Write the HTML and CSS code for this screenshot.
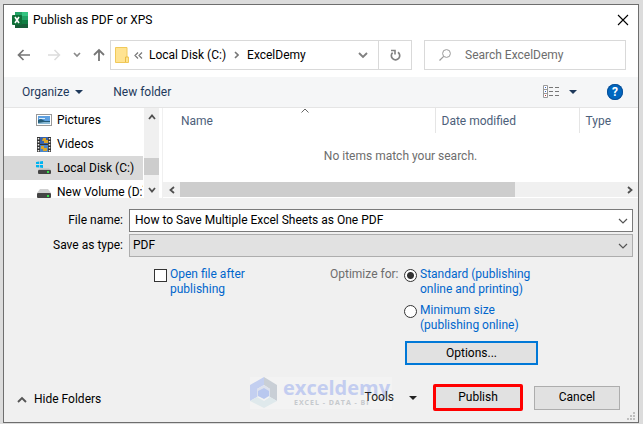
FILE: index.html
```html
<!DOCTYPE html>
<html lang="en">
<head>
    <meta charset="UTF-8" />
    <meta name="viewport" content="width=device-width, initial-scale=1.0"/>
    <title>Publish as PDF or XPS</title>
    <link rel="stylesheet" href="styles.css">
</head>
<body>

<main class="dialog">
    <!-- Title bar -->
    <header class="title-bar">
        <svg class="app-icon" width="16" height="16" viewBox="0 0 16 16">
            <rect x="3" y="0" width="13" height="16" rx="1" fill="#107c41"/>
            <rect x="3" y="0" width="7" height="4" fill="#21a366"/>
            <rect x="10" y="0" width="6" height="4" fill="#33c481"/>
            <rect x="10" y="4" width="6" height="4" fill="#21a366"/>
            <rect x="3" y="12" width="13" height="4" fill="#185c37"/>
            <rect x="0" y="3" width="10" height="10" rx="1" fill="#0f7038"/>
            <path d="M3 5L7 11M7 5L3 11" stroke="#fff" stroke-width="1.6"/>
        </svg>
        <h1>Publish as PDF or XPS</h1>
        <button class="icon-button close" aria-label="Close">
            <svg width="12" height="12" viewBox="0 0 12 12"><path d="M1 1L11 11M11 1L1 11" stroke="#000" stroke-width="1.1"/></svg>
        </button>
    </header>

    <!-- Address and search -->
    <div class="nav-bar">
        <div class="nav-buttons">
            <button class="icon-button" aria-label="Back">
                <svg width="14" height="12" viewBox="0 0 14 12"><path d="M13 6H2M6.500 1L1.500 6L6.500 11" fill="none" stroke="#767676" stroke-width="1.7"/></svg>
            </button>
            <button class="icon-button forward" aria-label="Forward">
                <svg width="14" height="12" viewBox="0 0 14 12"><path d="M1 6H12M7.500 1L12.500 6L7.500 11" fill="none" stroke="#dcdcdc" stroke-width="1.5"/></svg>
            </button>
            <button class="icon-button" aria-label="Recent locations">
                <svg width="8" height="6" viewBox="0 0 8 6"><path d="M1 1L4 4L7 1" fill="none" stroke="#8a8a8a" stroke-width="1.7"/></svg>
            </button>
            <button class="icon-button" aria-label="Up">
                <svg width="12" height="14" viewBox="0 0 12 14"><path d="M6 13V2M1 7L6 2L11 7" fill="none" stroke="#767676" stroke-width="1.8"/></svg>
            </button>
        </div>
        <div class="address">
            <svg width="14" height="16" viewBox="0 0 14 16">
                <path d="M.5.5H12V10H13.500V15.500H.5Z" fill="#ffe391" stroke="#f0c95a"/>
                <path d="M10.500 15V10H12.500" fill="none" stroke="#e9bd45"/>
            </svg>
            <svg class="crumb-more" width="9" height="7" viewBox="0 0 9 7"><path d="M4 .5L1 3.500L4 6.500M8 .5L5 3.500L8 6.500" fill="none" stroke="#777" stroke-width="1.2"/></svg>
            <a href="#">Local Disk (C:)</a>
            <svg class="crumb-sep" width="5" height="8" viewBox="0 0 5 8"><path d="M1 1L4 4L1 7" fill="none" stroke="#777" stroke-width="1.6"/></svg>
            <a href="#">ExcelDemy</a>
            <button class="icon-button address-drop" aria-label="Previous locations">
                <svg width="10" height="7" viewBox="0 0 10 7"><path d="M1 1L5 5L9 1" fill="none" stroke="#808080" stroke-width="1.9"/></svg>
            </button>
            <button class="icon-button refresh" aria-label="Refresh">
                <svg width="11" height="12" viewBox="0 0 11 12"><path d="M8 3.200A4.200 4.200 0 1 1 2.600 3.600" fill="none" stroke="#808080" stroke-width="1.7"/><path d="M1 1.500H5V5.500" fill="none" stroke="#808080" stroke-width="1.6"/></svg>
            </button>
        </div>
        <label class="search">
            <svg width="12" height="12" viewBox="0 0 12 12"><circle cx="7.500" cy="4.500" r="3.900" fill="none" stroke="#999"/><path d="M4.700 7.300L.5 11.500" stroke="#999" stroke-width="1.2"/></svg>
            <input type="search" placeholder="Search ExcelDemy" aria-label="Search ExcelDemy">
        </label>
    </div>

    <!-- Toolbar -->
    <div class="toolbar">
        <button class="tool organize">Organize
            <svg width="8" height="4" viewBox="0 0 8 4"><path d="M0 0H8L4 4Z" fill="#1e395b"/></svg>
        </button>
        <button class="tool">New folder</button>
        <button class="tool view" aria-label="Change your view">
            <svg width="17" height="14" viewBox="0 0 17 14">
                <path d="M.5.500H4.500V12.500H.5ZM.5 4.500H4.500M.5 8.500H4.500" fill="#fff" stroke="#999"/>
                <path d="M6 2.500H10M12 2.500H16M6 6.500H10M12 6.500H16M6 10.500H10M12 10.500H16" stroke="#777"/>
                <path d="M2 2H3V3H2ZM2 6H3V7H2Z" fill="#36c"/><path d="M2 10H3V11H2Z" fill="#b33"/>
            </svg>
            <svg width="8" height="4" viewBox="0 0 8 4"><path d="M0 0H8L4 4Z" fill="#1e395b"/></svg>
        </button>
        <button class="help" aria-label="Help">?</button>
    </div>

    <!-- Folder tree and file list -->
    <div class="browser">
        <nav class="tree">
            <a href="#">
                <svg width="16" height="16" viewBox="0 0 16 16">
                    <rect x=".5" y="2.500" width="15" height="11" fill="#fff" stroke="#999"/>
                    <rect x="2" y="4" width="12" height="8" fill="#5d9fe0"/>
                    <path d="M3 6H9V7H3Z" fill="#d9ecfa"/>
                    <path d="M2 8L5 7L9 9H14V12H2Z" fill="#245c78"/>
                    <path d="M2 11L8 10H14V12H2Z" fill="#8bbbd6"/>
                </svg>
                Pictures
            </a>
            <a href="#">
                <svg width="16" height="16" viewBox="0 0 16 16">
                    <rect x="1" y="1" width="14" height="15" fill="#333"/>
                    <rect x="4" y="1" width="8" height="7" fill="#3561ad"/>
                    <rect x="4" y="9" width="8" height="7" fill="#4b86c8"/>
                    <path d="M7 2H10V4H12V7H8V5H6ZM5 10H8V12H11V15H7V13H5Z" fill="#dca629"/>
                    <path d="M2.500 2V16M13.500 2V16" stroke="#eee" stroke-width="1.500" stroke-dasharray="1.500 1.500"/>
                </svg>
                Videos
            </a>
            <a href="#" class="selected">
                <svg width="16" height="16" viewBox="0 0 16 16">
                    <path d="M0 2L3 1.600V4H0ZM3.700 1.500L7 1V4H3.700ZM0 5H3V7.600L0 7.200ZM3.700 5H7V8L3.700 7.600Z" fill="#00b3f0"/>
                    <path d="M4 8.500H13L15 10H2Z" fill="#bbb"/>
                    <rect x="2" y="10" width="13" height="4" rx="1" fill="#444"/>
                    <rect x="11" y="11" width="2" height="2" fill="#37e04b"/>
                </svg>
                Local Disk (C:)
            </a>
            <a href="#">
                <svg width="16" height="16" viewBox="0 0 16 16">
                    <path d="M4 5H12L15 9H1Z" fill="#d0d0d0"/>
                    <rect x="1" y="9" width="14" height="5" rx="1" fill="#444"/>
                    <rect x="11" y="11" width="2" height="2" fill="#37e04b"/>
                </svg>
                New Volume (D:)
            </a>
        </nav>
        <div class="scroll-y">
            <button class="icon-button" aria-label="Scroll up">
                <svg width="8" height="6" viewBox="0 0 8 6"><path d="M1 5L4 1.500L7 5" fill="none" stroke="#505050" stroke-width="1.8"/></svg>
            </button>
            <div class="thumb"></div>
            <button class="icon-button" aria-label="Scroll down">
                <svg width="8" height="6" viewBox="0 0 8 6"><path d="M1 1L4 4.500L7 1" fill="none" stroke="#505050" stroke-width="1.8"/></svg>
            </button>
        </div>
        <div class="files">
            <table>
                <thead>
                    <tr>
                        <th class="col-name">Name
                            <svg class="sort" width="8" height="5" viewBox="0 0 8 5"><path d="M.5 4.500L4 1L7.500 4.500" fill="none" stroke="#666"/></svg>
                        </th>
                        <th class="col-date">Date modified</th>
                        <th>Type</th>
                    </tr>
                </thead>
                <tbody>
                    <tr>
                        <td colspan="3">No items match your search.</td>
                    </tr>
                </tbody>
            </table>
            <div class="scroll-x">
                <button class="icon-button" aria-label="Scroll left">
                    <svg width="6" height="8" viewBox="0 0 6 8"><path d="M5 1L1.500 4L5 7" fill="none" stroke="#505050" stroke-width="1.8"/></svg>
                </button>
                <div class="track"><div class="thumb"></div></div>
                <button class="icon-button" aria-label="Scroll right">
                    <svg width="6" height="8" viewBox="0 0 6 8"><path d="M1 1L4.500 4L1 7" fill="none" stroke="#505050" stroke-width="1.8"/></svg>
                </button>
            </div>
        </div>
    </div>

    <!-- File name, type and publish options -->
    <form class="fields">
        <label for="fileName">File name:</label>
        <div class="combo">
            <input type="text" id="fileName" value="How to Save Multiple Excel Sheets as One PDF">
            <svg width="10" height="6" viewBox="0 0 10 6"><path d="M1 1L5 5L9 1" fill="none" stroke="#555" stroke-width="1.2"/></svg>
        </div>
        <label for="fileType">Save as type:</label>
        <div class="combo combo-gray">
            <select id="fileType">
                <option>PDF</option>
                <option>XPS Document</option>
            </select>
            <svg width="10" height="6" viewBox="0 0 10 6"><path d="M1 1L5 5L9 1" fill="none" stroke="#555" stroke-width="1.2"/></svg>
        </div>
    </form>

    <div class="options">
        <label class="choice open-after"><input type="checkbox"><span>Open file after publishing</span></label>
        <span class="caption">Optimize for:</span>
        <div class="optimize">
            <label class="choice"><input type="radio" name="optimize" checked><span>Standard (publishing<br>online and printing)</span></label>
            <label class="choice"><input type="radio" name="optimize"><span>Minimum size<br>(publishing online)</span></label>
            <button class="btn btn-focus">Options...</button>
        </div>
    </div>

    <!-- Footer -->
    <footer>
        <button class="hide-folders">
            <svg width="10" height="7" viewBox="0 0 10 7"><path d="M1 6L5 2L9 6" fill="none" stroke="#555" stroke-width="1.9"/></svg>
            Hide Folders
        </button>
        <div class="tools-area">
            <div class="watermark">
                <svg width="28" height="32" viewBox="0 0 28 32">
                    <path d="M14 0L0 8V24L7 20V12L14 8Z" fill="#c3cff0"/>
                    <path d="M14 0L27 8V24L20 20V12L14 8Z" fill="#c9cfd6"/>
                    <path d="M0 24L7 20L14 24L20 20L27 24L14 31Z" fill="#dfe9ec"/>
                    <path d="M14 8L20 12V20L14 16L7 20V12Z" fill="#dde2ee"/>
                    <path d="M14 11L19 14V19L14 22L8 19V14Z" fill="#b9c8ef"/>
                </svg>
                <div>
                    <div class="brand">exceldemy</div>
                    <div class="tagline">EXCEL - DATA - BI</div>
                </div>
            </div>
            <button class="tools">Tools
                <svg width="8" height="4" viewBox="0 0 8 4"><path d="M0 0H8L4 4Z" fill="#222"/></svg>
            </button>
        </div>
        <button class="btn btn-publish">Publish</button>
        <button class="btn">Cancel</button>
        <svg class="grip" width="8" height="8" viewBox="0 0 8 8"><path d="M6 0H8V2H6ZM3 3H5V5H3ZM6 3H8V5H6ZM0 6H2V8H0ZM3 6H5V8H3ZM6 6H8V8H6Z" fill="#bfbfbf"/></svg>
    </footer>
</main>

</body>
</html>
```
FILE: styles.css
```css
* {
    box-sizing: border-box;
}

body {
    margin: 0;
    padding: 4px 4px 1px 3px;
    min-height: 100vh;
    display: flex;
    background: #dcdcdc;
    font-family: Roboto, "Open Sans", sans-serif;
    font-size: 12px;
    line-height: 15px;
    color: #000;
}

button, input, select {
    font: inherit;
    color: inherit;
}

button {
    padding: 0;
    border: none;
    background: none;
}

a {
    color: inherit;
    text-decoration: none;
}

svg {
    display: block;
    flex: none;
}

.dialog {
    flex: 1;
    display: flex;
    flex-direction: column;
    position: relative;
    min-width: 0;
    background: #f0f0f0;
    border: 1px solid #6e6e6e;
}

.icon-button {
    display: flex;
    align-items: center;
    justify-content: center;
}

/* Title bar */
.title-bar {
    display: flex;
    align-items: center;
    gap: 5px;
    height: 30px;
    padding: 0 9px 0 8px;
    background: #fff;
}

.title-bar h1 {
    flex: 1;
    margin: 0;
    font-size: 12px;
    font-weight: normal;
}

/* Address and search */
.nav-bar {
    display: flex;
    padding: 5px 12px 7px 0;
    background: #fff;
}

.nav-buttons {
    display: flex;
    align-items: center;
    gap: 12px;
    width: 106px;
    padding-left: 13px;
}

.forward {
    margin-left: 4px;
}

.address {
    flex: 1;
    display: flex;
    align-items: center;
    height: 30px;
    padding-left: 4px;
    border: 1px solid #d9d9d9;
}

.crumb-more {
    margin: 0 6px 0 5px;
}

.crumb-sep {
    margin: 0 8px;
}

.address-drop {
    margin-left: auto;
    width: 30px;
}

.refresh {
    width: 33px;
    height: 28px;
    border-left: 1px solid #d9d9d9;
}

.search {
    display: flex;
    align-items: center;
    gap: 14px;
    width: 202px;
    margin-left: 12px;
    padding-left: 14px;
    border: 1px solid #d9d9d9;
}

.search input {
    flex: 1;
    min-width: 0;
    padding: 0;
    border: none;
    outline: none;
    background: none;
}

.search input::placeholder {
    color: #6d6d6d;
}

/* Toolbar */
.toolbar {
    display: flex;
    align-items: center;
    height: 31px;
    padding: 0 15px 0 18px;
    background: #f5f6f7;
    border-bottom: 1px solid #e5e5e5;
    color: #1e395b;
}

.tool {
    display: flex;
    align-items: center;
    gap: 6px;
}

.organize {
    margin-right: 30px;
}

.view {
    gap: 9px;
    margin-left: auto;
    margin-right: 30px;
}

.help {
    width: 16px;
    height: 16px;
    border-radius: 50%;
    background: #0067c0;
    box-shadow: inset 0 0 0 1px #0b4f96;
    color: #fff;
    font-weight: bold;
}

/* Folder tree and file list */
.browser {
    display: flex;
    height: 90px;
    background: #fff;
}

.tree {
    width: 139px;
    overflow: hidden;
}

.tree a {
    display: flex;
    align-items: center;
    gap: 5px;
    height: 24px;
    padding-left: 32px;
    white-space: nowrap;
}

.tree .selected {
    background: #d9d9d9;
}

.scroll-y {
    display: flex;
    flex-direction: column;
    width: 15px;
    margin-left: 1px;
    background: #f0f0f0;
}

.scroll-y button {
    height: 17px;
}

.scroll-y .thumb {
    height: 17px;
    margin: auto 0 6px;
}

.thumb {
    background: #cdcdcd;
}

.files {
    flex: 1;
    display: flex;
    flex-direction: column;
    margin-left: 3px;
    border-left: 1px solid #f0f0f0;
}

table {
    width: 100%;
    border-collapse: collapse;
    table-layout: fixed;
}

th {
    position: relative;
    height: 25px;
    padding: 2px 6px 0;
    border-left: 1px solid #e5e5e5;
    font-weight: normal;
    text-align: left;
    color: #4c607a;
}

.col-name {
    width: 272px;
    padding-left: 18px;
    border-left: none;
}

.col-date {
    width: 144px;
}

.sort {
    position: absolute;
    top: 0;
    left: 51%;
}

td {
    padding: 16px 0 0;
    text-align: center;
    color: #6d6d6d;
}

.scroll-x {
    display: flex;
    height: 15px;
    margin-top: auto;
    margin-bottom: 1px;
    background: #f0f0f0;
}

.scroll-x button {
    width: 17px;
}

.track {
    flex: 1;
}

.track .thumb {
    width: 76%;
    height: 100%;
}

/* File name and type */
.fields {
    display: grid;
    grid-template-columns: 119px 1fr;
    gap: 2px 6px;
    align-items: center;
    padding: 11px 5px 0 0;
}

.fields label {
    text-align: right;
}

.combo {
    display: flex;
    align-items: center;
    height: 23px;
    padding-right: 4px;
    border: 1px solid #7a7a7a;
    background: #fff;
}

.combo-gray {
    background: #e1e1e1;
    border-color: #adadad;
}

.combo input, .combo select {
    flex: 1;
    min-width: 0;
    padding: 0 5px;
    border: none;
    outline: none;
    background: none;
    appearance: none;
}

.combo select {
    padding: 0 3px;
}

/* Publish options */
.options {
    display: grid;
    grid-template-columns: 176px 74px 1fr;
    padding: 10px 0 0 150px;
    color: #0066cc;
}

.caption {
    color: #6d6d6d;
}

.choice {
    display: flex;
    align-items: flex-start;
    gap: 3px;
}

.open-after {
    width: 106px;
}

.choice input {
    flex: none;
    appearance: none;
    width: 13px;
    height: 13px;
    margin: 2px 0 0;
    border: 1px solid #333;
    background: #fff;
}

.choice input[type="radio"] {
    border-radius: 50%;
}

.choice input[type="radio"]:checked {
    background: radial-gradient(circle, #333 3px, #fff 4px);
}

.optimize {
    display: flex;
    flex-direction: column;
    gap: 6px;
}

.btn {
    width: 86px;
    height: 24px;
    border: 1px solid #adadad;
    background: #e1e1e1;
    color: #000;
}

.btn-focus {
    width: 133px;
    margin: 2px 0 0 1px;
    border: 2px solid #0078d7;
}

/* Footer */
footer {
    display: flex;
    align-items: center;
    margin-top: auto;
    padding: 0 18px 11px 13px;
}

.hide-folders {
    display: flex;
    align-items: center;
    gap: 7px;
    margin-top: 4px;
}

.tools-area {
    position: relative;
    margin-left: auto;
    margin-right: 16px;
}

.tools {
    position: relative;
    display: flex;
    align-items: center;
    gap: 15px;
    color: #222;
}

.watermark {
    position: absolute;
    top: -13px;
    right: 25px;
    display: flex;
    gap: 5px;
    width: 142px;
    height: 32px;
    background: #f3f3f3;
    font-family: "Open Sans", sans-serif;
}

.brand {
    font-size: 20px;
    font-weight: bold;
    line-height: 21px;
    color: #c3cdf0;
}

.tagline {
    padding-left: 11px;
    font-size: 7px;
    font-weight: bold;
    line-height: 9px;
    white-space: nowrap;
    letter-spacing: 1px;
    color: #c6c9cd;
}

.btn-publish {
    width: 90px;
    height: 27px;
    margin-right: 11px;
    border: 3px solid #f00;
    border-radius: 2px;
}

.grip {
    position: absolute;
    right: 3px;
    bottom: 2px;
}
```
